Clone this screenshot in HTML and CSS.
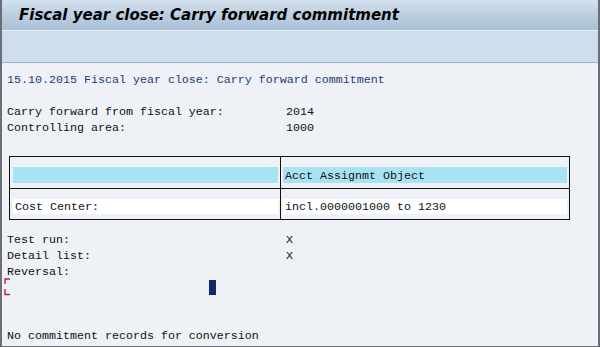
FILE: index.html
```html
<!DOCTYPE html>
<html lang="en">
<head>
    <meta charset="UTF-8">
    <title>Fiscal year close: Carry forward commitment</title>
    <link rel="stylesheet" href="styles.css">
</head>
<body>
    <div class="window">
        <div class="titlebar">
            <h1>Fiscal year close: Carry forward commitment</h1>
        </div>
        <div class="toolbar"></div>

        <div class="content">
            <div class="line heading">15.10.2015 Fiscal year close: Carry forward commitment</div>
            <div class="line"></div>
            <div class="pair"><span>Carry forward from fiscal year:</span><span>2014</span></div>
            <div class="pair"><span>Controlling area:</span><span>1000</span></div>

            <table class="assign">
                <tr>
                    <td class="left"><div class="bar blue"></div></td>
                    <td class="right"><div class="bar blue">Acct Assignmt Object</div></td>
                </tr>
                <tr>
                    <td class="left"><div class="bar white">Cost Center:</div></td>
                    <td class="right"><div class="bar white">incl.0000001000 to 1230</div></td>
                </tr>
            </table>

            <div class="pair"><span>Test run:</span><span>X</span></div>
            <div class="pair"><span>Detail list:</span><span>X</span></div>
            <div class="line">Reversal:</div>
            <div class="line cursor-row">
                <svg class="bracket" width="7" height="18" viewBox="0 0 7 18">
                    <path d="M1 6 V1 H6" fill="none" stroke="#c4203a" stroke-width="1.4"/>
                    <path d="M1 11 V16.5 H6" fill="none" stroke="#c4203a" stroke-width="1.4"/>
                </svg>
                <span class="cursor"></span>
            </div>
            <div class="line"></div>
            <div class="line"></div>
            <div class="line">No commitment records for conversion</div>
        </div>
    </div>
</body>
</html>
```

FILE: styles.css
```css
* {
    margin: 0;
    padding: 0;
    box-sizing: border-box;
}

body {
    background: #eef1f6;
}

.window {
    width: 600px;
    height: 347px;
    background: #eef1f6;
    border-left: 2px solid #6b6f75;
    border-right: 2px solid #6b6f75;
    border-bottom: 1px solid #6b6f75;
    overflow: hidden;
}

.titlebar {
    height: 30px;
    background: linear-gradient(to bottom, #d3e0ec 0%, #bccfe1 50%, #a9c0d6 100%);
    padding-left: 17px;
    display: flex;
    align-items: center;
}

.titlebar h1 {
    font-family: "DejaVu Sans", Verdana, sans-serif;
    font-weight: bold;
    font-style: italic;
    font-size: 15px;
    color: #000;
    padding-bottom: 1px;
}

.toolbar {
    height: 33px;
    background: #cfdeed;
    border-top: 1px solid #e6eef6;
    border-bottom: 1px solid #9fb3c8;
}

.content {
    padding: 9px 0 0 5px;
    font-family: "Liberation Mono", "Courier New", monospace;
    font-size: 11.667px;
    color: #111;
}

.line {
    height: 16px;
    line-height: 16px;
    white-space: pre;
}

.heading {
    color: #1c3b7c;
}

.pair {
    display: grid;
    grid-template-columns: 279px auto;
    height: 16px;
    line-height: 16px;
}

.assign {
    border-collapse: collapse;
    margin: 20px 0 12px 2px;
    width: 561px;
    border: 1px solid #111;
}

.assign tr + tr td {
    border-top: 1px solid #111;
}

.assign td {
    padding: 10px 2px 5px 3px;
    vertical-align: top;
}

.assign td.left {
    width: 271px;
    border-right: 1px solid #111;
}

.assign td.right {
    padding-left: 2px;
}

.bar {
    height: 16px;
    line-height: 16px;
    padding: 1px 0 0 2px;
    white-space: pre;
}

.bar.blue {
    background: #a8e3f4;
}

.bar.white {
    background: #ffffff;
    height: 15px;
    line-height: 15px;
}

.cursor-row {
    display: flex;
    align-items: flex-start;
    margin-left: -3px;
}

.bracket {
    margin-top: -2px;
}

.cursor {
    width: 7px;
    height: 15px;
    margin-left: 198px;
    background: #0f2a6a;
}
```
